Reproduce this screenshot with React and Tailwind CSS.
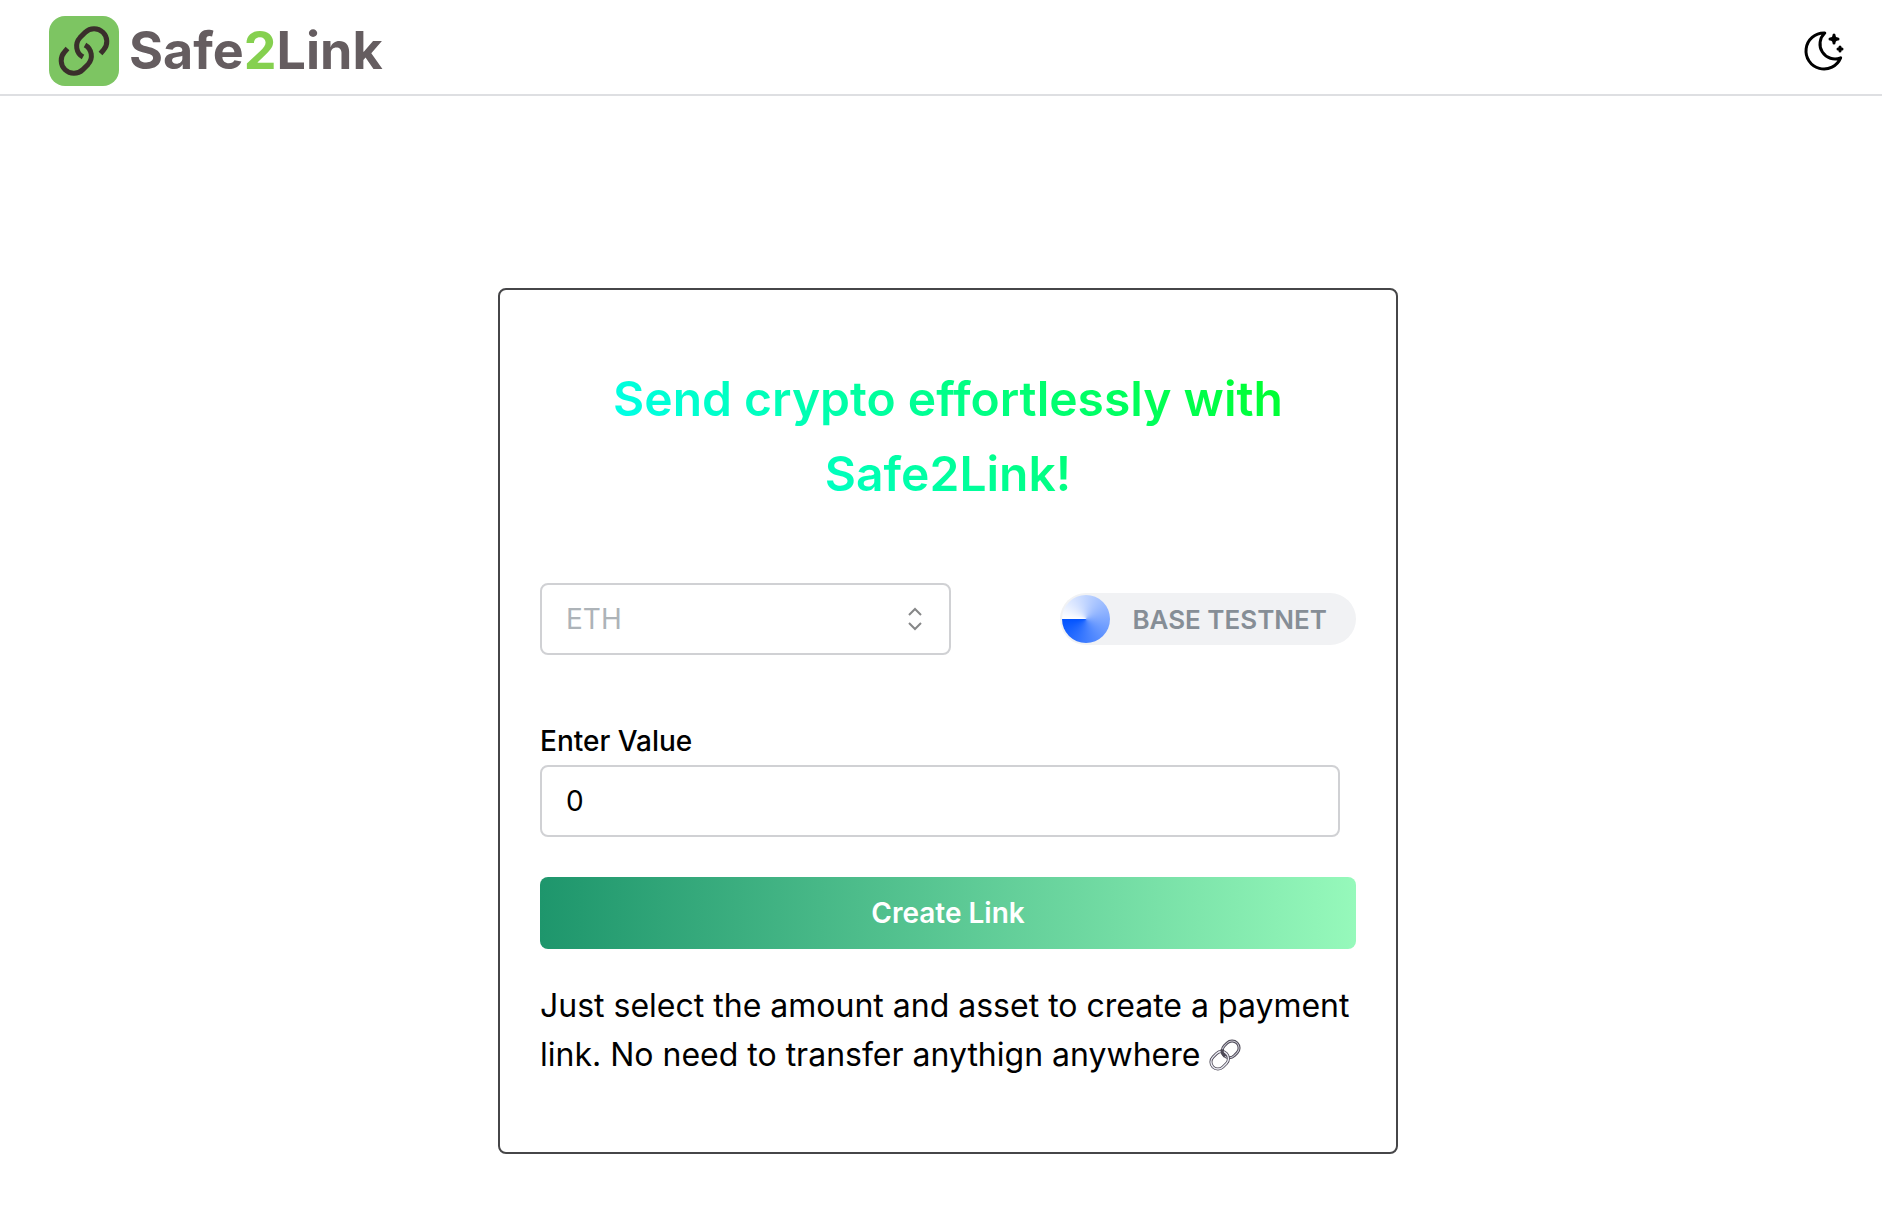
import React, { useState } from "react";
import { TbMoonStars } from "react-icons/tb";

const LogoMark = () => (
  <svg viewBox="0 0 70 70" className="size-[70px]" aria-hidden="true">
    <rect width="70" height="70" rx="16" fill="#7dc562" />
    <g fill="none" stroke="#3a2f2b" strokeWidth="5">
      <path d="M51.5 37.5 L54.5 34 A12.7 12.7 0 0 0 36.2 16.4 L31 21.6 A12.5 12.5 0 0 0 34 41" />
      <path d="M51.5 37.5 L54.5 34 A12.7 12.7 0 0 0 36.2 16.4 L31 21.6 A12.5 12.5 0 0 0 34 41" transform="rotate(180 35 35)" />
    </g>
  </svg>
);

const LinkEmoji = () => (
  <svg viewBox="0 0 32 32" className="inline-block size-8 align-[-5px]" role="img" aria-label="link">
    <g fill="none" transform="rotate(-45 16 16)">
      <rect x="15" y="9" width="18" height="14" rx="7" stroke="#4d4956" strokeWidth="3" />
      <rect x="15" y="9" width="18" height="14" rx="7" stroke="#c9c8d2" strokeWidth="1" />
      <rect x="-1" y="9" width="19" height="14" rx="7" stroke="#4d4956" strokeWidth="3" />
      <rect x="-1" y="9" width="19" height="14" rx="7" stroke="#ececf4" strokeWidth="1.4" />
      <path d="M15 17 V16 A7 7 0 0 1 18 10" stroke="#4d4956" strokeWidth="3" />
    </g>
  </svg>
);

const App = () => {
  const [asset, setAsset] = useState("ETH");
  const [value, setValue] = useState("0");

  const handleSubmit = (e) => {
    e.preventDefault();
  };

  return (
    <div className="min-h-screen bg-white font-[Inter,sans-serif] text-black">
      {/* Header */}
      <header className="flex h-24 items-start justify-between border-b-2 border-[#dedfe2] pt-4 pr-[34px] pl-[49px]">
        <a href="#" className="flex h-[70px] items-center gap-[10px]">
          <LogoMark />
          <span className="text-[52px] leading-[72px] font-bold text-[#655d60]">
            Safe<span className="text-[#85d04f]">2</span>Link
          </span>
        </a>
        <button type="button" aria-label="Toggle color scheme" className="flex h-[70px] items-center">
          <TbMoonStars className="size-12 [stroke-width:1.5]" />
        </button>
      </header>

      {/* Create link card */}
      <main className="flex justify-center pt-48 pl-[14px]">
        <form
          onSubmit={handleSubmit}
          className="w-full max-w-[900px] rounded-lg border-2 border-[#464648] px-[40px] pt-[71px] pb-[73px]"
        >
          <h1 className="bg-[linear-gradient(45deg,#00ffff_8%,#00ff00_108%)] bg-clip-text text-center text-5xl leading-[75px] font-semibold text-transparent">
            Send crypto effortlessly with Safe2Link!
          </h1>

          <div className="mt-[72px] flex items-center justify-between">
            <div className="relative w-[411px]">
              <select
                aria-label="Asset"
                value={asset}
                onChange={(e) => setAsset(e.target.value)}
                className="h-[72px] w-full appearance-none rounded-lg border-2 border-[#d0d1d4] bg-white px-6 text-[28px] text-[#adb3b8]"
              >
                <option value="ETH">ETH</option>
              </select>
              <svg
                viewBox="0 0 16 24"
                className="pointer-events-none absolute top-6 right-7 h-6 w-4"
                fill="none"
                stroke="#868788"
                strokeWidth="2"
                aria-hidden="true"
              >
                <path d="M2 8 L8 2 L14 8 M2 16 L8 22 L14 16" />
              </svg>
            </div>

            <div className="flex h-[52px] items-center rounded-full bg-[#f1f2f4] pr-[29px] pl-[2px]">
              <span className="mr-[22px] size-12 rounded-full bg-[conic-gradient(from_270deg,#ffffff,#0052ff)]" />
              <span className="text-[26px] font-semibold text-[#868e96]">BASE TESTNET</span>
            </div>
          </div>

          <div className="mt-16">
            <label htmlFor="amount" className="block text-[28px] leading-[44px] font-medium">
              Enter Value
            </label>
            <input
              id="amount"
              type="text"
              inputMode="decimal"
              value={value}
              onChange={(e) => setValue(e.target.value)}
              className="mt-[2px] block h-[72px] w-[800px] max-w-full rounded-lg border-2 border-[#d0d1d4] px-6 text-[28px]"
            />
          </div>

          <button
            type="submit"
            className="mt-10 block h-[72px] w-full rounded-lg bg-[linear-gradient(90deg,#1e966c,#96f9bb)] text-[28px] font-semibold text-white"
          >
            Create Link
          </button>

          <p className="mt-8 text-[32px] leading-[49px]">
            Just select the amount and asset to create a payment link. No need to transfer anythign
            anywhere <LinkEmoji />
          </p>
        </form>
      </main>
    </div>
  );
};

export default App;
